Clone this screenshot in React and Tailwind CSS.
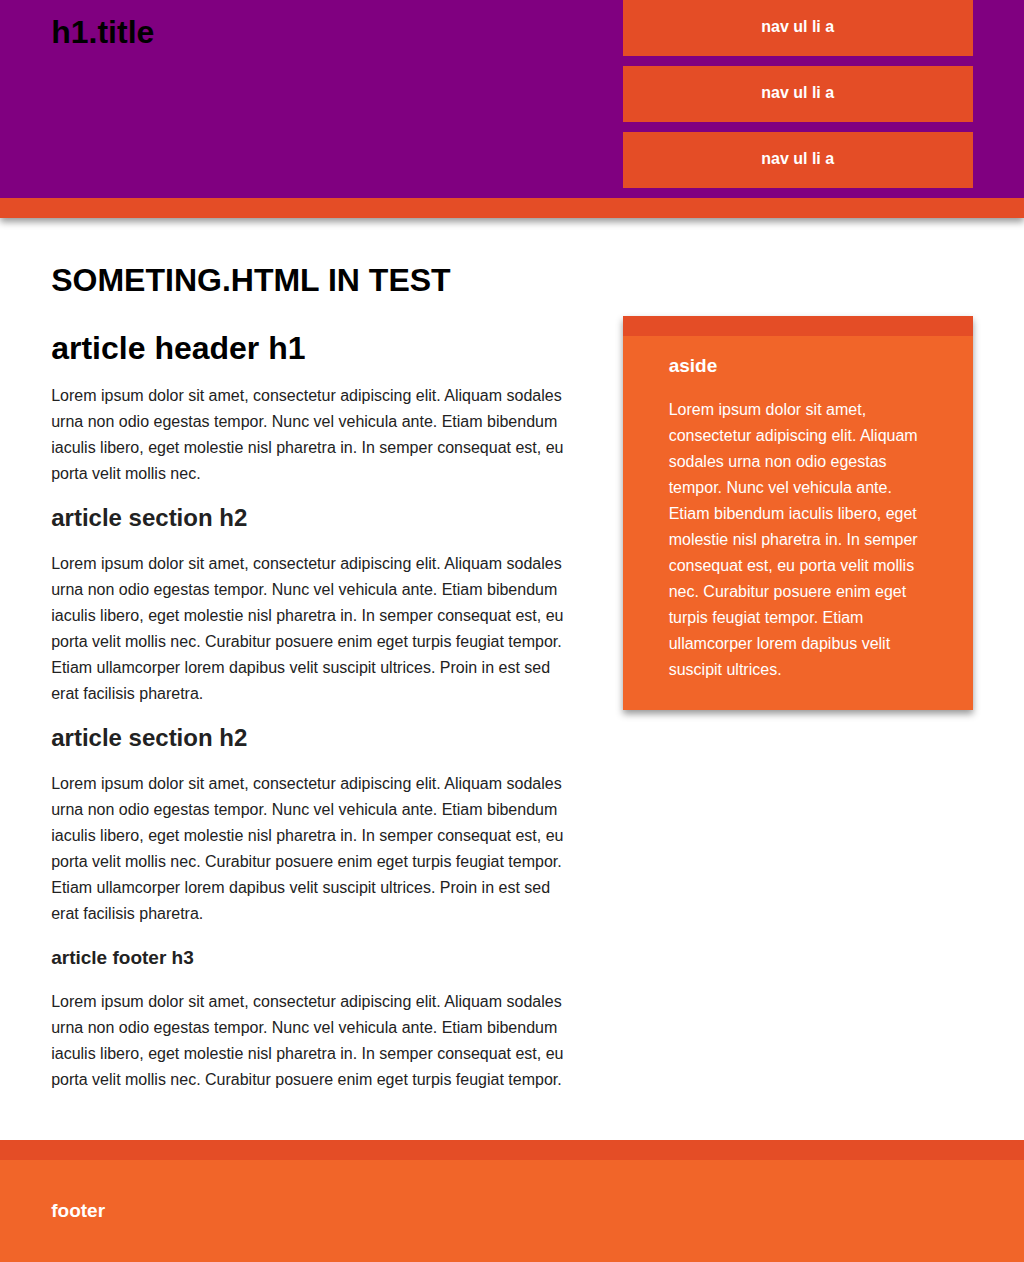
const intro =
  "Lorem ipsum dolor sit amet, consectetur adipiscing elit. Aliquam sodales urna non odio egestas tempor. Nunc vel vehicula ante. Etiam bibendum iaculis libero, eget molestie nisl pharetra in. In semper consequat est, eu porta velit mollis nec.";
const middle = " Curabitur posuere enim eget turpis feugiat tempor.";
const asideEnd = " Etiam ullamcorper lorem dapibus velit suscipit ultrices.";
const sectionEnd = " Proin in est sed erat facilisis pharetra.";

function Section({ title, children }) {
  return (
    <section>
      <h2 className="text-2xl leading-[34px] font-bold">{title}</h2>
      <p className="mt-4 mb-3.5">{children}</p>
    </section>
  );
}

export default function App() {
  return (
    <div className="flex min-h-screen flex-col bg-white font-['Liberation_Sans',Helvetica,Arial,sans-serif] text-base leading-[26px] text-[#222]">
      <header className="z-10 border-b-20 border-[#e44d26] bg-[#800080] shadow-[0_4px_7px_#999]">
        <div className="mx-auto flex w-[90%] items-start justify-between">
          <h1 className="pt-2 text-[32px] leading-[48px] font-bold text-black">h1.title</h1>
          <nav className="w-[38%]">
            <ul>
              {[1, 2, 3].map((item) => (
                <li key={item} className="mb-2.5">
                  <a href="#" className="block bg-[#e44d26] pt-3.5 pb-4 text-center font-bold text-white">
                    nav ul li a
                  </a>
                </li>
              ))}
            </ul>
          </nav>
        </div>
      </header>

      <main className="mx-auto w-[90%] grow pt-10 pb-[33px]">
        <h1 className="text-[32px] leading-[44px] font-bold text-black">SOMETING.HTML IN TEST</h1>
        <div className="flex items-start justify-between pt-3.5">
          <article className="w-[57%] pt-2">
            <header>
              <h1 className="text-[32px] leading-[48px] font-bold text-black">article header h1</h1>
              <p className="mt-[11px] mb-3.5">{intro}</p>
            </header>
            <Section title="article section h2">{intro + middle + asideEnd + sectionEnd}</Section>
            <Section title="article section h2">{intro + middle + asideEnd + sectionEnd}</Section>
            <footer>
              <h3 className="mt-[18px] text-[19px] leading-[26px] font-bold">article footer h3</h3>
              <p className="mt-[18px] mb-3.5">{intro + middle}</p>
            </footer>
          </article>
          <aside className="w-[38%] border-t-20 border-[#e44d26] bg-[#f16529] px-[5%] pt-[17px] pb-[27px] text-white shadow-[0_4px_7px_#999]">
            <h3 className="text-[19px] leading-[26px] font-bold">aside</h3>
            <p className="mt-[18px]">{intro + middle + asideEnd}</p>
          </aside>
        </div>
      </main>

      <footer className="border-t-20 border-[#e44d26] bg-[#f16529] text-white">
        <div className="mx-auto w-[90%] py-[38px]">
          <h3 className="text-[19px] leading-[26px] font-bold">footer</h3>
        </div>
      </footer>
    </div>
  );
}
